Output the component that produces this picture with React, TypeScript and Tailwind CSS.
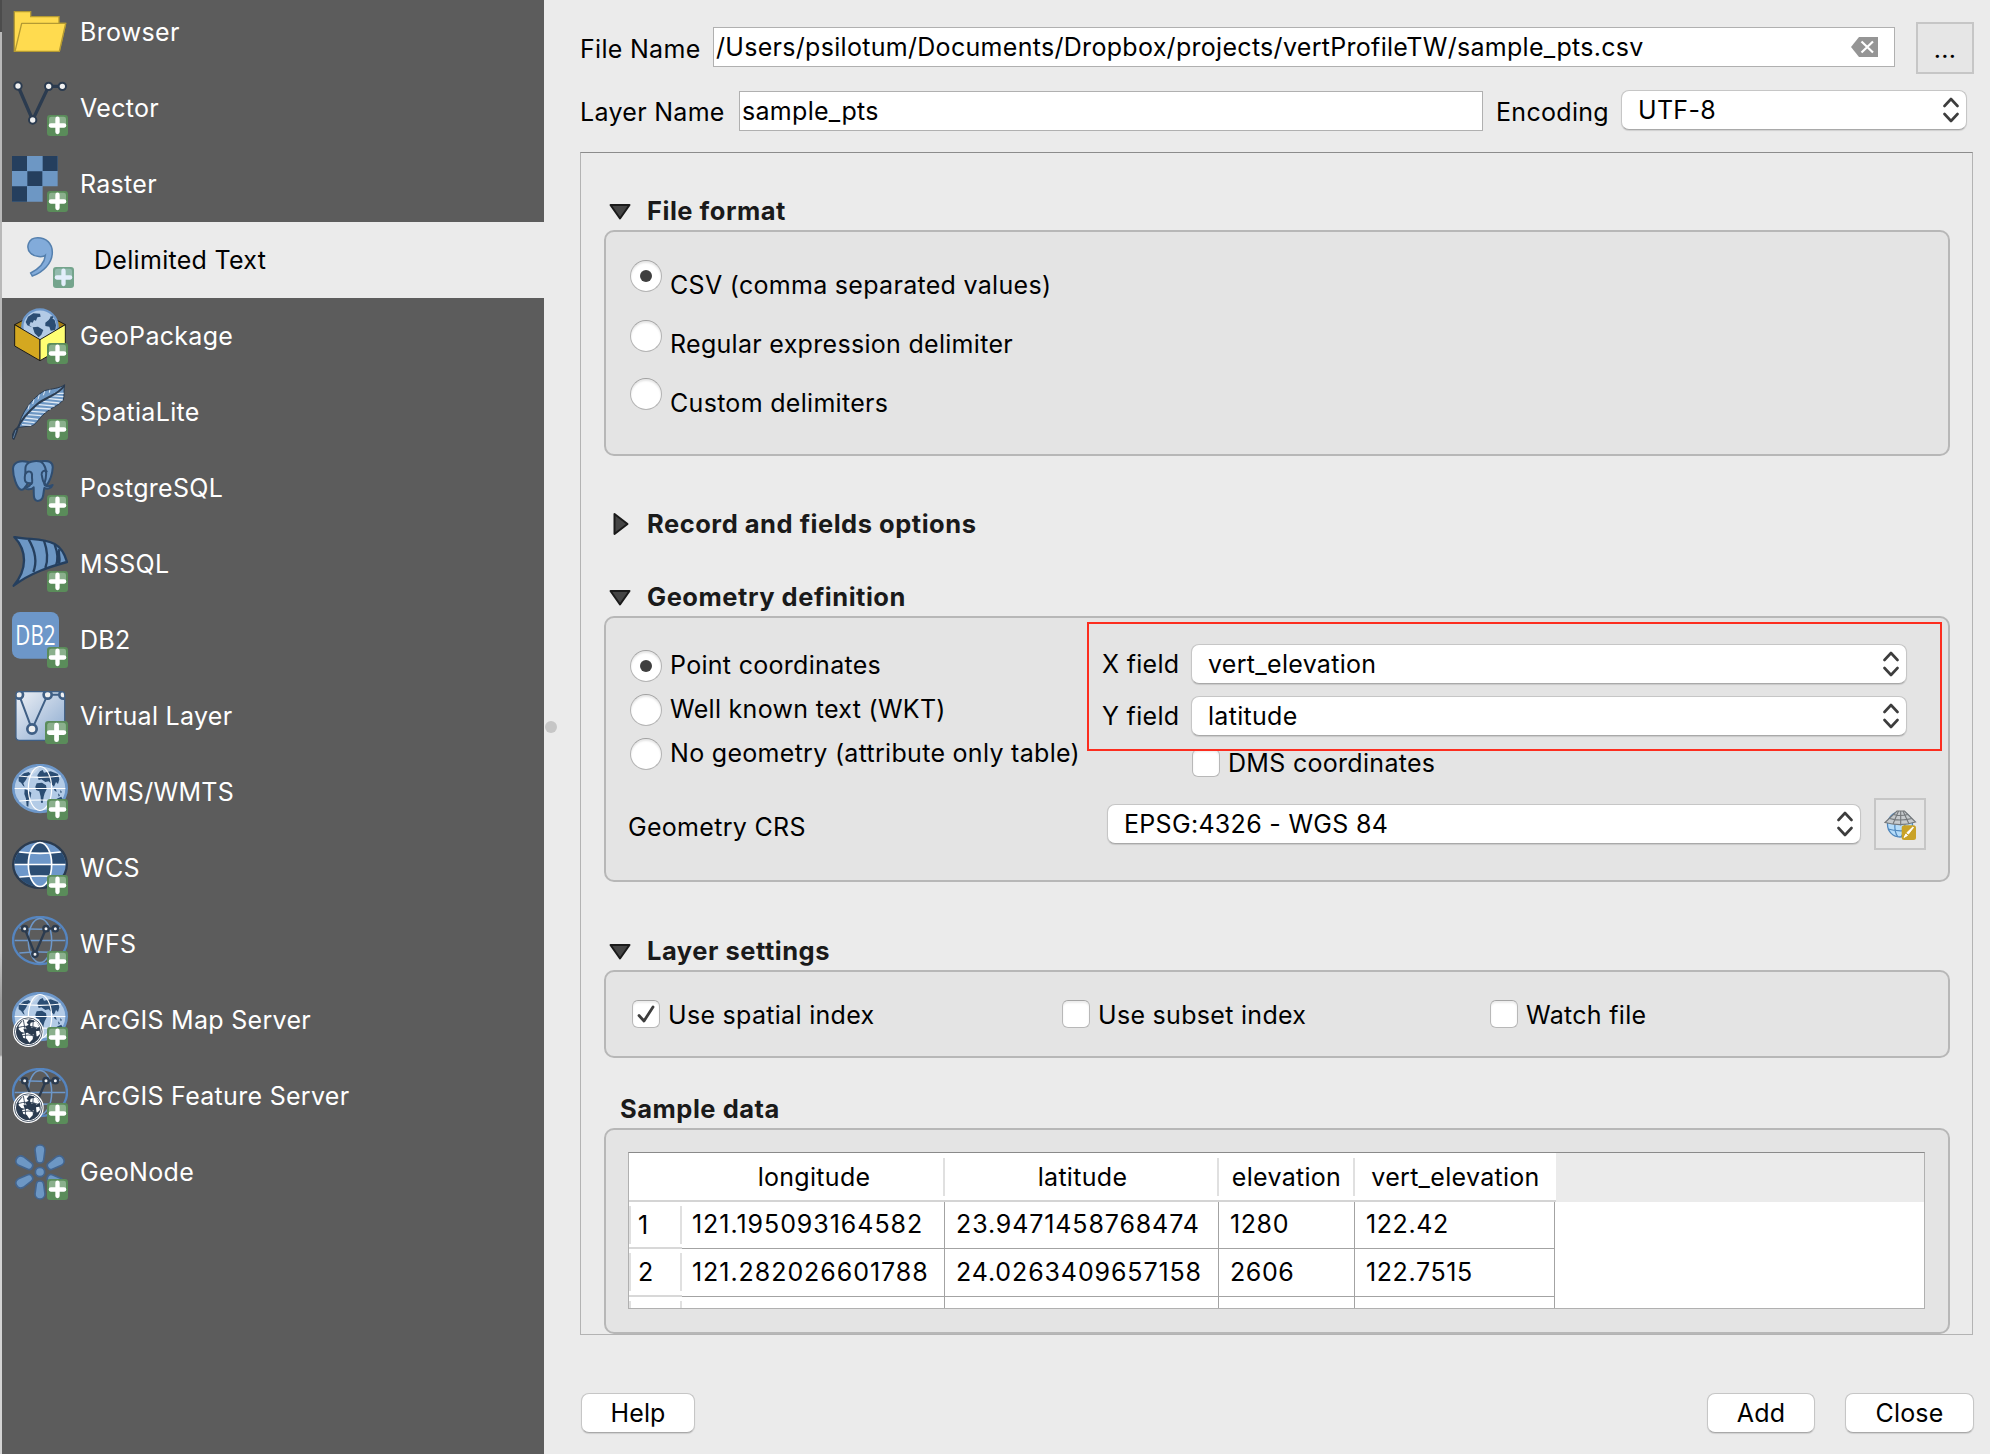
import React from "react";

type Kids = { children?: React.ReactNode };

/* ---------- icon building blocks ---------- */

function Icon({ box, children }: { box: string } & Kids) {
  return (
    <svg viewBox={box} className="h-14 w-14 shrink-0" fill="none">
      {children}
    </svg>
  );
}

function Plus({ x, y, soft, scale = 1 }: { x: number; y: number; soft?: boolean; scale?: number }) {
  return (
    <g transform={`translate(${x} ${y}) scale(${scale})`}>
      <rect width="63" height="63" rx="9" fill={soft ? "#74a48c" : "#5a8c5a"} />
      <path d="M6 12Q6 5 13 5H50Q57 5 57 12V31H6Z" fill={soft ? "#93bbae" : "#8bb08d"} />
      <path d="M31.500 11V51M11.500 31.500H51.500" stroke={soft ? "#e3eefb" : "#fff"} strokeWidth="13" strokeLinecap="round" />
    </g>
  );
}

function Node({ x, y, r = 11, w = 6 }: { x: number; y: number; r?: number; w?: number }) {
  return <circle cx={x} cy={y} r={r} fill="#f1f1f1" stroke="#2b3b4f" strokeWidth={w} />;
}

/* Continents for a 168-wide globe centred on 84,74 */
function Continents() {
  return (
    <g fill="#2b4d73">
      <path d="M20 40L36 28L50 24L56 30L48 35L46 40L42 47L39 52L34 58L38 68L34 66L27 56L20 52Z" />
      <path d="M56 20L74 12L82 13L72 24L64 30L60 36Z" fill="#c9d9ec" />
      <path d="M38 76L46 78L58 86L56 98L50 112L49 128L44 126L42 104L37 90Z" />
      <path d="M76 34L84 22L92 18L96 26L116 22L138 30L142 46L138 60L132 54L126 68L118 60L110 52L100 54L88 46L80 48Z" />
      <path d="M74 58L90 56L102 64L104 76L98 88L95 98L92 117L87 116L86 98L82 82L72 78L70 68Z" />
      <path d="M124 72L132 76L134 84L128 80ZM138 88L144 94L140 98ZM144 78L150 84L146 88Z" />
      <path d="M134 104L148 98L152 106L142 114Z" />
    </g>
  );
}

function Meridians({ color, width = 4 }: { color: string; width?: number }) {
  return (
    <g stroke={color} strokeWidth={width} fill="none">
      <path d="M8 73.500H160M22 36Q84 44 146 36M22 111Q84 105 146 111" />
      <ellipse cx="84" cy="73.500" rx="35" ry="66" />
    </g>
  );
}

function MapGlobe() {
  return (
    <g>
      <ellipse cx="84" cy="73.500" rx="80" ry="70" fill="#b3cbe6" stroke="#6d97c9" strokeWidth="8" />
      <Continents />
      <Meridians color="#fff" width={3.500} />
    </g>
  );
}

function WireGlobe() {
  return (
    <g>
      <ellipse cx="84" cy="73.500" rx="81" ry="70.500" stroke="#5585c0" strokeWidth="7" />
      <Meridians color="#6d97c9" width={4.500} />
      <path d="M38 38L69 115L102 38H130" stroke="#2b3b4f" strokeWidth="7" />
      <Node x={38} y={38} r={8} w={7} />
      <Node x={69} y={115} r={8} w={7} />
      <Node x={102} y={38} r={8} w={7} />
      <Node x={130} y={38} r={8} w={7} />
    </g>
  );
}

function EsriGlobe() {
  return (
    <g>
      <circle cx="49" cy="119" r="46" fill="#fff" />
      <circle cx="49" cy="119" r="41.500" fill="#fff" stroke="#2b3b4f" strokeWidth="2.500" />
      <circle cx="49" cy="119" r="37" fill="#2b3b4f" />
      <path d="M20 101L34 84L52 82L44 92L50 98L40 104L44 112L34 110L38 122L28 120L20 112ZM56 92L72 88L82 104L74 110L66 104L60 108L54 100ZM30 126L46 122L58 130L66 126L62 142L52 152L44 140L34 138ZM72 118L82 116L84 126L74 136Z" fill="#fff" />
      <path d="M14 108Q48 96 82 110M18 136Q48 122 80 136M34 84Q44 118 40 154M64 84Q58 120 66 152" stroke="#2b3b4f" strokeWidth="2.500" />
    </g>
  );
}

const icons = {
  browser: (
    <Icon box="36 12 168 168">
      <path d="M43 35H92V50H177V70H197L178 154H43Z" fill="#ffdb4f" stroke="#b49a33" strokeWidth="4" />
      <path d="M65 70H197L178 154H45Z" fill="#ffdb4f" stroke="#b49a33" strokeWidth="4" strokeLinejoin="round" />
    </Icon>
  ),
  vector: (
    <Icon box="36 240 168 168">
      <path d="M54 258L98 360L146 259H187" stroke="#2b3b4f" strokeWidth="10" />
      <Node x={54} y={258} />
      <Node x={98} y={360} />
      <Node x={146} y={259} />
      <Node x={187} y={259} />
      <Plus x={141} y={345} />
    </Icon>
  ),
  raster: (
    <Icon box="36 468 168 168">
      <path d="M36 468H173V559H128V605H36Z" fill="#6d97c4" />
      <path d="M36 468H81V513H36ZM128 468H173V513H128ZM82 514H127V558H82ZM36 559H81V605H36Z" fill="#253f5e" />
      <Plus x={141} y={573} />
    </Icon>
  ),
  delimited: (
    <Icon box="54 696 168 168">
      <path
        d="M113 713C138 713 157 730 157 757C157 790 128 818 97 828L92 819C117 806 134 790 136 766C130 772 104 772 92 760C76 744 84 713 113 713Z"
        fill="#82abda"
        stroke="#5580ae"
        strokeWidth="4.500"
      />
      <Plus x={159} y={801} soft />
    </Icon>
  ),
  geopackage: (
    <Icon box="36 24 168 168">
      <path d="M44 74L120 34L196 74L120 118Z" fill="#a37c12" stroke="#1a1a1a" strokeWidth="3" />
      <circle cx="120" cy="81" r="53" fill="#b3cbe6" stroke="#6d97c9" strokeWidth="7" />
      <path d="M77 66L84 50L100 40L120 41L122 50L112 52L108 62L102 60L98 68L92 66L88 76L96 82L82 76ZM98 82L114 80L130 90L124 104L116 112L104 100ZM136 68L146 60L152 52L164 60L168 76L166 90L152 92L148 80L136 78ZM150 50L158 48L160 54L152 56Z" fill="#2b4d73" />
      <path d="M44 74L120 119V182L44 138Z" fill="#d4a820" stroke="#1a1a1a" strokeWidth="3" strokeLinejoin="round" />
      <path d="M196 74L120 119V182L196 138Z" fill="#ffff73" stroke="#1a1a1a" strokeWidth="3" strokeLinejoin="round" />
      <Plus x={141} y={129} />
    </Icon>
  ),
  spatialite: (
    <Icon box="36 252 168 168">
      <path d="M194 254C190 272 194 284 190 300C176 318 146 326 128 346C112 362 106 376 92 378L56 382C60 344 96 292 134 272C154 266 178 266 194 254Z" fill="#6d97c4" stroke="#2b3b4f" strokeWidth="3" />
      <path d="M66 374L94 376M70 364L104 368M76 354L114 358M84 344L124 347M94 334L136 337M104 324L152 327M116 314L164 318M128 304L178 309M140 295L188 300M150 287L190 290M162 280L191 280" stroke="#dfe9f4" strokeWidth="4" />
      <path d="M134 274L130 286M118 284L114 298M102 298L98 312M88 314L84 328M150 269L148 278" stroke="#dfe9f4" strokeWidth="3" />
      <path d="M192 258C176 284 140 290 112 312C84 336 60 366 52 386C50 400 44 408 41 416C34 412 42 392 50 386" stroke="#2b3b4f" strokeWidth="6" strokeLinecap="round" />
      <path d="M48 390L40 414" stroke="#6d97c4" strokeWidth="2" />
      <Plus x={141} y={357} />
    </Icon>
  ),
  postgres: (
    <Icon box="36 480 168 168">
      <g fill="#6d97c4" stroke="#2f4d70" strokeWidth="6" strokeLinejoin="round" strokeLinecap="round">
        <path d="M122 484C144 480 160 486 158 504C157 524 148 544 140 556L130 548Z" />
        <path d="M84 486C60 480 40 486 39 506C39 530 50 562 62 569C70 572 76 562 82 552Z" />
        <path d="M78 497C84 482 120 478 130 492C142 508 138 536 133 552C134 560 146 561 158 555C154 566 142 568 133 564C129 576 134 602 113 603C98 602 102 580 101 562C92 572 76 568 76 562C84 562 90 558 92 550C78 550 72 546 75 526C78 512 74 506 78 497Z" />
        <path d="M78 520C84 510 98 514 96 528C95 540 100 546 94 552" fill="none" />
        <path d="M140 514C132 510 124 514 125 524C128 534 126 542 133 550" fill="none" />
      </g>
      <Plus x={141} y={585} />
    </Icon>
  ),
  mssql: (
    <Icon box="36 708 168 168">
      <path d="M43 711C90 720 130 714 164 732C186 744 196 768 201 786C150 800 92 818 41 857C82 810 82 752 43 711Z" fill="#6d97c4" stroke="#253f5e" strokeWidth="7" strokeLinejoin="round" />
      <path d="M86 718C108 756 110 790 100 816M132 722C144 756 144 782 136 804M164 734C174 760 176 776 168 796M178 748C172 762 184 778 176 790" stroke="#253f5e" strokeWidth="7" />
      <Plus x={141} y={813} />
    </Icon>
  ),
  db2: (
    <Icon box="36 36 168 168">
      <rect x="36" y="36" width="141" height="140" rx="24" fill="#6d97c9" />
      <text x="46" y="135" fontFamily="Open Sans" fontSize="83" fill="#fff" textLength="121" lengthAdjust="spacingAndGlyphs">
        DB2
      </text>
      <Plus x={141} y={141} />
    </Icon>
  ),
  virtual: (
    <Icon box="36 264 168 168">
      <defs>
        <linearGradient id="sheet" x1="0" y1="0" x2="1" y2="1">
          <stop offset="0" stopColor="#eef1f6" />
          <stop offset="1" stopColor="#8aa9cf" />
        </linearGradient>
        <clipPath id="sheetClip">
          <rect x="48" y="275" width="146" height="147" rx="9" />
        </clipPath>
      </defs>
      <rect x="48" y="275" width="146" height="146" rx="9" fill="url(#sheet)" />
      <g clipPath="url(#sheetClip)" stroke="#3f5f85">
        <path d="M57 284L96 388L143 284H192" strokeWidth="6" />
        <g fill="#f1f1f1" strokeWidth="8">
          <circle cx="57" cy="284" r="12" />
          <circle cx="143" cy="284" r="12" />
          <circle cx="190" cy="284" r="12" />
          <circle cx="96" cy="387" r="14" />
        </g>
      </g>
      <rect x="48" y="275" width="146" height="146" rx="9" stroke="#3f5f85" strokeWidth="3.500" />
      <Plus x={135} y={363} scale={1.1} />
    </Icon>
  ),
  wms: (
    <Icon box="0 0 168 168">
      <MapGlobe />
      <Plus x={105} y={105} />
    </Icon>
  ),
  wcs: (
    <Icon box="0 0 168 168">
      <defs>
        <clipPath id="wcsClip">
          <ellipse cx="84" cy="73.500" rx="77" ry="67" />
        </clipPath>
        <clipPath id="wcsMid">
          <ellipse cx="84" cy="73.500" rx="35" ry="67" />
        </clipPath>
      </defs>
      <ellipse cx="84" cy="73.500" rx="80.500" ry="70" fill="#6d97c9" stroke="#2b3b4f" strokeWidth="7" />
      <g clipPath="url(#wcsClip)" fill="#2b4d73">
        <path d="M0 38H168V73H0ZM0 110H168V147H0Z" />
      </g>
      <g clipPath="url(#wcsMid)">
        <path d="M40 0H130V150H40Z" fill="#6d97c9" />
        <path d="M40 0H130V38H40ZM40 74H130V107H40Z" fill="#2b4d73" />
      </g>
      <Meridians color="#fff" width={5} />
      <Plus x={105} y={105} />
    </Icon>
  ),
  wfs: (
    <Icon box="0 0 168 168">
      <WireGlobe />
      <Plus x={105} y={105} />
    </Icon>
  ),
  arcmap: (
    <Icon box="0 0 168 168">
      <MapGlobe />
      <EsriGlobe />
      <Plus x={105} y={105} />
    </Icon>
  ),
  arcfeature: (
    <Icon box="0 0 168 168">
      <WireGlobe />
      <EsriGlobe />
      <Plus x={105} y={105} />
    </Icon>
  ),
  geonode: (
    <Icon box="36 732 168 168">
      <g fill="#6d97c4" stroke="#43658f" strokeWidth="5">
        <circle cx="120" cy="816" r="14" />
        {[0, 60, 120, 180, 240, 300].map((a) => (
          <path key={a} transform={`rotate(${a} 120 816)`} d="M105 750C105 730 135 730 135 750L131 780C130 792 110 792 109 780Z" />
        ))}
      </g>
      <Plus x={141} y={837} />
    </Icon>
  ),
};

const sources: { label: string; icon: keyof typeof icons; selected?: boolean }[] = [
  { label: "Browser", icon: "browser" },
  { label: "Vector", icon: "vector" },
  { label: "Raster", icon: "raster" },
  { label: "Delimited Text", icon: "delimited", selected: true },
  { label: "GeoPackage", icon: "geopackage" },
  { label: "SpatiaLite", icon: "spatialite" },
  { label: "PostgreSQL", icon: "postgres" },
  { label: "MSSQL", icon: "mssql" },
  { label: "DB2", icon: "db2" },
  { label: "Virtual Layer", icon: "virtual" },
  { label: "WMS/WMTS", icon: "wms" },
  { label: "WCS", icon: "wcs" },
  { label: "WFS", icon: "wfs" },
  { label: "ArcGIS Map Server", icon: "arcmap" },
  { label: "ArcGIS Feature Server", icon: "arcfeature" },
  { label: "GeoNode", icon: "geonode" },
];

function Sidebar() {
  return (
    <div className="flex w-[544px] shrink-0">
      <div className="w-[2px] bg-[linear-gradient(to_bottom,#4c4c4c_32px,#b9b9b9_32px,#b9b9b9_340px,#c9c9c9_390px,#c9c9c9_950px,#9c9c9c_1000px,#9c9c9c_1055px,#d4d4d4_1057px)]" />
      <nav className="-mt-[6px] flex flex-1 flex-col bg-[#5c5c5c]">
        {sources.map((s) => (
          <div
            key={s.label}
            className={
              s.selected
                ? "flex h-[76px] items-center gap-5 bg-[#ebebeb] pl-4 text-black"
                : "flex h-[76px] items-center gap-3 pl-[10px] text-white"
            }
          >
            {icons[s.icon]}
            <span>{s.label}</span>
          </div>
        ))}
      </nav>
    </div>
  );
}

/* ---------- form controls ---------- */

function Combo({ value, className }: { value: string; className: string }) {
  return (
    <div
      className={`flex h-10 items-center justify-between rounded-[8px] border border-[#c6c6c6] border-b-[#a9a9a9] bg-white pr-[7px] pl-4 shadow-[0_1px_1px_rgba(0,0,0,0.12)] ${className}`}
    >
      <span>{value}</span>
      <svg viewBox="0 0 16 26" className="h-[26px] w-4" fill="none" stroke="#3d3d3d" strokeWidth="2.600" strokeLinecap="round" strokeLinejoin="round">
        <path d="M1.500 9L8 2L14.500 9M1.500 17L8 24L14.500 17" />
      </svg>
    </div>
  );
}

function Radio({ on }: { on?: boolean }) {
  return (
    <div className="flex h-8 w-8 shrink-0 items-center justify-center rounded-full border border-[#b4b4b4] border-t-[#a0a0a0] bg-white shadow-[inset_0_2px_2px_rgba(0,0,0,0.1)]">
      {on && <div className="h-3 w-3 rounded-full bg-[#3f3f3f]" />}
    </div>
  );
}

function Check({ on }: { on?: boolean }) {
  return (
    <div className="flex h-7 w-7 shrink-0 items-center justify-center rounded-[6px] border border-[#b8b8b8] border-t-[#a4a4a4] bg-white shadow-[inset_0_2px_2px_rgba(0,0,0,0.08)]">
      {on && (
        <svg viewBox="0 0 18 18" className="h-[18px] w-[18px]" fill="none" stroke="#3d3d3d" strokeWidth="2.800" strokeLinecap="round" strokeLinejoin="round">
          <path d="M2 10.500L7 16L16 2" />
        </svg>
      )}
    </div>
  );
}

function Heading({ title, state, className }: { title: string; state?: "open" | "closed"; className: string }) {
  return (
    <div className={`flex h-[34px] items-start pl-[5px] text-[#1a1a1a] ${className}`}>
      {state && (
        <svg viewBox="0 0 22 30" className="mr-[5px] h-[30px] w-[22px]" fill="#444" stroke="#1a1a1a" strokeWidth="2" strokeLinejoin="round">
          {state === "open" ? <path d="M1.500 9H20.500L11 22.500Z" /> : <path d="M5.500 5L18.500 15L5.500 25Z" />}
        </svg>
      )}
      <span className="ml-[11px] text-[25.5px] font-bold leading-[30px] tracking-[0.52px]">{title}</span>
    </div>
  );
}

function Group({ className, children }: { className: string } & Kids) {
  return <div className={`relative rounded-[10px] border-2 border-[#b7b7b7] bg-[#e4e4e4] ${className}`}>{children}</div>;
}

function PushButton({ label, className }: { label: string; className: string }) {
  return (
    <button
      className={`flex h-10 items-center justify-center rounded-[8px] border border-[#c6c6c6] border-b-[#a9a9a9] bg-white tracking-[0.15px] shadow-[0_1px_1px_rgba(0,0,0,0.12)] ${className}`}
    >
      {label}
    </button>
  );
}

function CrsIcon() {
  return (
    <svg viewBox="0 0 34 34" className="h-[34px] w-[34px]" fill="none">
      <circle cx="17" cy="17.500" r="12.500" fill="#b5dcf9" stroke="#4f87bd" strokeWidth="1.300" />
      <path d="M5 22Q14 25 28 23M12 16Q11 25 15 30M22 17Q21 26 18 30" stroke="#4f87bd" strokeWidth="1.200" />
      <path d="M14 4H21.500L32.500 15Q17.500 20 2 15.500Z" fill="#c6cacd" stroke="#74787b" strokeWidth="1.200" />
      <path d="M10.500 7.500Q17 9.500 25 7.500M6.500 11.500Q17 14.500 29 11.500M15.500 4L10 17M17.700 4V18.500M20 4L26 17" stroke="#74787b" strokeWidth="1.100" />
      <rect x="18.700" y="18.200" width="14.300" height="14.800" rx="2.500" fill="#c9a227" />
      <path d="M30.500 20.500L25.500 27L23.800 25.800L29.800 20ZM22.800 27L24.500 28.500L21 30.500Z" fill="#fff" stroke="#fff" strokeWidth="0.900" />
    </svg>
  );
}

/* ---------- sample table ---------- */

const columns = [
  { name: "longitude", head: "w-[263px] pl-[3px]", body: "w-[263px] pl-[10px] tracking-[0.95px]" },
  { name: "latitude", head: "w-[274px] pl-[3px]", body: "w-[274px] pl-[11px] tracking-[0.88px]" },
  { name: "elevation", head: "w-[136px] pl-px", body: "w-[136px] pl-[11px] tracking-[0.6px]" },
  { name: "vert_elevation", head: "w-[200px] pl-px", body: "w-[200px] pl-[11px] tracking-[0.6px]" },
];

const rows = [
  { n: "1", h: "h-[47px]", line: "leading-[44px]", cells: ["121.195093164582", "23.9471458768474", "1280", "122.42"] },
  { n: "2", h: "h-[48px]", line: "leading-[46px]", cells: ["121.282026601788", "24.0263409657158", "2606", "122.7515"] },
  { n: "", h: "h-[48px]", line: "leading-[44px]", cells: ["", "", "", ""] },
];

function SampleTable() {
  return (
    <div className="ml-[22px] mt-[22px] h-[157px] w-[1297px] overflow-hidden border border-[#b0b0b0] border-t-[#8a8a8a] bg-white">
      <div className="flex h-[49px] bg-[#ebebeb]">
        <div className="flex w-[927px] border-b-2 border-[#d4d4d4] bg-white pl-[53px]">
          {columns.map((c, i) => (
            <div key={c.name} className={`flex shrink-0 items-center ${c.head}`}>
              <span className="flex-1 text-center">{c.name}</span>
              {i < 3 && <div className="h-[38px] w-[2px] bg-[#e0e0e0]" />}
            </div>
          ))}
        </div>
      </div>
      {rows.map((r, i) => (
        <div key={i} className={`flex ${r.h}`}>
          <div className="flex w-[53px] items-start border-b-2 border-[#d8d8d8] pt-1">
            <div className="h-[38px] w-[2px] bg-[#e0e0e0]" />
            <span className="flex-1 pl-[7px] leading-[38px]">{r.n}</span>
            <div className="h-[38px] w-[2px] bg-[#e0e0e0]" />
          </div>
          {r.cells.map((v, j) => (
            <div key={j} className={`border-r border-b border-[#a3a3a3] ${r.line} ${columns[j].body}`}>
              {v}
            </div>
          ))}
        </div>
      ))}
    </div>
  );
}

/* ---------- page ---------- */

export default function App() {
  return (
    <div className="flex h-[1454px] w-[1990px] overflow-hidden whitespace-nowrap bg-[#ebebeb] font-['Inter',sans-serif] text-[25px] leading-[30px] tracking-[0.3px] text-black">
      <Sidebar />
      <div className="flex w-[14px] shrink-0 items-center justify-center">
        <div className="h-3 w-3 rounded-full bg-[#c6c6c6]" />
      </div>
      <main className="flex flex-1 flex-col pl-[22px] pr-4 pt-[22px]">
        <div className="flex h-[52px] items-start">
          <span className="mt-3 w-[133px]">File Name</span>
          <div className="mt-[5px] flex h-10 w-[1182px] items-center justify-between border border-[#b0b0b0] bg-white pl-[2px] pr-[16px]">
            <span>/Users/psilotum/Documents/Dropbox/projects/vertProfileTW/sample_pts.csv</span>
            <svg viewBox="0 0 27 20" className="-mt-px h-5 w-[27px]" fill="none">
              <path d="M8 0H27V20H8L0 10Z" fill="#959595" />
              <path d="M10.500 4.500L22 15.500M22 4.500L10.500 15.500" stroke="#fff" strokeWidth="2.200" />
            </svg>
          </div>
          <div className="ml-[21px] flex h-[52px] w-[58px] items-center justify-center border-2 border-[#c6c6c6] bg-[#e6e6e6] pt-0.5">...</div>
        </div>
        <div className="mt-4 flex h-[42px] items-start">
          <span className="mt-[7px] w-[159px]">Layer Name</span>
          <div className="mt-px flex h-10 w-[744px] items-center border border-[#b0b0b0] bg-white pl-[2px]">sample_pts</div>
          <span className="ml-[13px] mt-[7px] w-[125px]">Encoding</span>
          <Combo value="UTF-8" className="w-[346px]" />
        </div>

        <div className="mt-5 h-[1183px] w-[1393px] border border-[#b3b3b3] border-t-[#8c8c8c] pl-[23px] pr-[22px]">
          <Heading title="File format" state="open" className="mt-[43px]" />
          <Group className="h-[226px] pl-6 pt-7">
            <div className="flex h-[60px] items-start gap-2">
              <Radio on />
              <span className="mt-[10px]">CSV (comma separated values)</span>
            </div>
            <div className="flex h-[58px] items-start gap-2">
              <Radio />
              <span className="mt-[9px]">Regular expression delimiter</span>
            </div>
            <div className="flex items-start gap-2">
              <Radio />
              <span className="mt-[10px]">Custom delimiters</span>
            </div>
          </Group>

          <Heading title="Record and fields options" state="closed" className="mt-[53px]" />
          <Heading title="Geometry definition" state="open" className="mt-[39px]" />
          <Group className="h-[266px]">
            <div className="flex h-[180px]">
              <div className="flex w-[496px] flex-col gap-3 pl-6 pt-8">
                <div className="flex gap-2">
                  <Radio on />
                  <span>Point coordinates</span>
                </div>
                <div className="flex gap-2">
                  <Radio />
                  <span>Well known text (WKT)</span>
                </div>
                <div className="flex gap-2">
                  <Radio />
                  <span>No geometry (attribute only table)</span>
                </div>
              </div>
              <div className="pt-[26px]">
                <div className="flex h-[52px]">
                  <span className="w-[89px] leading-10">X field</span>
                  <Combo value="vert_elevation" className="w-[716px]" />
                </div>
                <div className="flex h-[52px]">
                  <span className="w-[89px] leading-10">Y field</span>
                  <Combo value="latitude" className="w-[716px]" />
                </div>
                <div className="flex items-center gap-2 pl-[90px]">
                  <Check />
                  <span>DMS coordinates</span>
                </div>
              </div>
            </div>
            <div className="flex h-[52px] items-start">
              <span className="ml-[22px] mt-[14px] w-[479px]">Geometry CRS</span>
              <Combo value="EPSG:4326 - WGS 84" className="mt-[6px] w-[754px]" />
              <div className="ml-[13px] flex h-[52px] w-[52px] items-center justify-center border-2 border-[#c6c6c6] bg-[#e6e6e6]">
                <CrsIcon />
              </div>
            </div>
            <div className="absolute left-[481px] top-1 h-[129px] w-[855px] border-2 border-[#fc2d1f]" />
          </Group>

          <Heading title="Layer settings" state="open" className="mt-[54px]" />
          <Group className="flex h-[88px] items-center pl-[26px]">
            <div className="flex w-[430px] items-center gap-2">
              <Check on />
              <span className="pt-0.5">Use spatial index</span>
            </div>
            <div className="flex w-[428px] items-center gap-2">
              <Check />
              <span className="pt-0.5">Use subset index</span>
            </div>
            <div className="flex items-center gap-2">
              <Check />
              <span className="pt-0.5">Watch file</span>
            </div>
          </Group>

          <Heading title="Sample data" className="mt-9" />
          <Group className="flex h-[206px] items-start">
            <SampleTable />
          </Group>
        </div>

        <div className="mt-[58px] flex pl-px">
          <PushButton label="Help" className="w-[114px]" />
          <PushButton label="Add" className="ml-auto w-[108px]" />
          <PushButton label="Close" className="ml-[30px] w-[129px]" />
        </div>
      </main>
    </div>
  );
}
